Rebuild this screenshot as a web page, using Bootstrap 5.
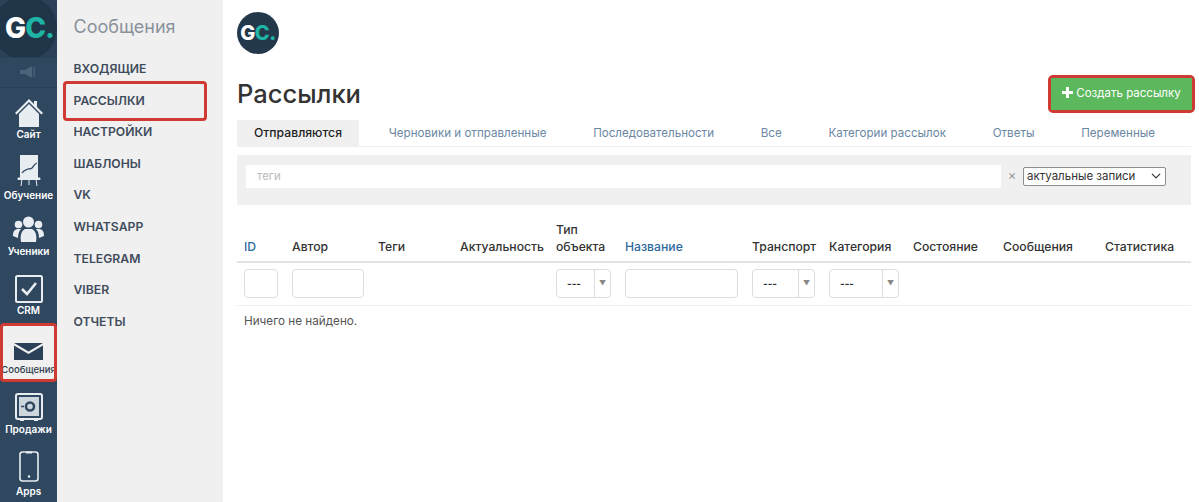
<!DOCTYPE html>
<html lang="ru">
<head>
    <meta charset="UTF-8">
    <meta name="viewport" content="width=device-width, initial-scale=1.0">
    <title>Рассылки</title>
    <link href="https://cdn.jsdelivr.net/npm/bootstrap@5.3.0/dist/css/bootstrap.min.css" rel="stylesheet">
    <style>
        html, body { height: 502px; overflow: hidden; }
        body { font-family: Inter, "Noto Sans", sans-serif; font-size: 13px; color: #333; background: #fff; }

        .rail { width: 57px; height: 502px; background: #2f475f; flex: none; }
        .rail-logo { height: 57px; background: #2b4158; overflow: hidden; }
        .rail-logo-circle { width: 64px; height: 64px; margin: -4px 0 0 -7px; border-radius: 50%; background: #1f3548; font-size: 28px; font-weight: 800; letter-spacing: -1px; color: #fff; padding-left: 9px; }
        .teal { color: #1fb5a6; }
        .rail-mute { height: 31px; border-top: 1px solid #2a3f55; border-bottom: 1px solid #2a3f55; }
        .rail-item { color: #fff; font-size: 10px; line-height: 12px; font-weight: 600; padding-bottom: 5px; white-space: nowrap; text-decoration: none; }
        .rail-item svg { display: block; }
        .h-site { height: 58px; }
        .h-learn { height: 61px; }
        .h-students { height: 56px; }
        .h-crm { height: 59px; }
        .h-msg { height: 60px; }
        .h-sales { height: 58px; }
        .h-apps { height: 62px; }
        .gap-s { margin-bottom: 1px; }
        .gap-m { margin-bottom: 2px; }
        .gap-l { margin-bottom: 3px; }
        .rail-active { background: #f0f0f0; color: #2f3d4d; border: 3px solid #cf3a32; border-radius: 4px; font-weight: 500; margin-top: 2px; padding-bottom: 3px; font-size: 9.5px; overflow: hidden; }
        .rail-active svg { margin-bottom: 4px; }

        .side { width: 166px; height: 502px; background: #f0f0f0; flex: none; padding: 15px 0 0 16.500px; }
        .side-title { font-size: 18px; line-height: 23px; color: #8a929c; margin-bottom: 15px; }
        .side-link { display: block; height: 31.600px; line-height: 31.600px; font-size: 12.200px; font-weight: 600; color: #3f4c5c; text-decoration: none; }
        .side-boxed { position: relative; }
        .side-boxed::after { content: ""; position: absolute; left: -10.500px; top: -4px; width: 144px; height: 40px; border: 3px solid #cf3a32; border-radius: 4px; }

        .page { width: 976px; padding: 12px 8px 0 14px; flex: none; }
        .page-logo { width: 42px; height: 42px; border-radius: 50%; background: #24384c; color: #fff; font-size: 20px; font-weight: 800; letter-spacing: -.5px; }
        .page-head { height: 72px; margin-top: 8px; }
        .page-title { font-size: 25.500px; font-weight: 500; color: #333; margin: 0; line-height: 32px; padding-top: 16px; }
        .create-wrap { border: 3px solid #cf3a32; border-radius: 5px; margin-right: -4px; margin-top: 13px; }
        .create-btn { width: 141px; height: 32px; background: #5cb85c; color: #fff; font-size: 11.500px; border: 0; border-radius: 0; padding: 0; }
        .create-btn:hover { background: #5cb85c; color: #fff; }
        .create-btn svg { margin-right: 3px; vertical-align: -1px; }

        .mail-tabs { height: 27px; border-bottom: 1px solid #eee; margin-top: -14px; gap: 12.700px; flex-wrap: nowrap; }
        .mail-tabs .nav-link { font-size: 11.600px; line-height: 26px; height: 26px; padding: 0 17px; color: #6b87a3; border-radius: 0; white-space: nowrap; }
        .mail-tabs .nav-link.active { background: #f0f0f0; color: #222; font-size: 12.200px; font-weight: 500; }
        .filter-bar { height: 50px; margin-top: 8px; background: #f0f0f0; padding: 0 25px 0 9px; }
        .tag-input { width: 755px; height: 23px; margin-bottom: 8px; background: #fff; color: #bbb; font-size: 11.500px; padding-left: 11px; line-height: 23px; }
        .tag-clear { width: 22px; margin-bottom: 8px; text-align: center; color: #999; font-size: 13px; }
        .state-select { width: 143px; height: 19px; min-height: 0; font-size: 11.500px; line-height: 15px; padding: 0 20px 0 3px; margin-bottom: 8px; margin-left: auto; border: 1px solid #8d8d8d; border-radius: 2px; color: #333; background-position: right 3px center; background-size: 12px 10px; font-family: inherit; }

        .mail-table { table-layout: fixed; width: 954px; margin: 9px 0 0; font-size: 12.200px; --bs-table-border-color: #eee; }
        .mail-table th { font-weight: 500; color: #333; padding: 0 7px 6px; line-height: 17px; vertical-align: bottom; border-bottom: 2px solid #e4e4e4; height: 48px; }
        .mail-table th .sort-link { color: #2d6a9f; text-decoration: none; }
        .mail-table td { padding: 6px 7px 7px; height: 43px; border-bottom: 1px solid #eee; vertical-align: top; }
        .mail-table tr.empty-row td { border: 0; padding: 7px; height: auto; color: #555; font-size: 11.700px; }
        .cell-input { height: 29px; border: 1px solid #ddd; border-radius: 4px; background: #fff; }
        .cell-select { height: 29px; border: 1px solid #ddd; border-radius: 4px; background: #fff; color: #333; font-size: 10px; font-weight: 700; line-height: 27px; padding-left: 10px; }
        .cell-arrow { width: 16px; margin-left: auto; border-left: 1px solid #ddd; color: #888; font-size: 7px; text-align: center; font-weight: 400; }
    </style>
</head>
<body class="d-flex">

<!-- Main rail -->
<div class="rail d-flex flex-column">
    <div class="rail-logo">
        <div class="rail-logo-circle d-flex align-items-center justify-content-center"><span>G<span class="teal">C.</span></span></div>
    </div>
    <div class="rail-mute d-flex align-items-center justify-content-center">
        <svg width="20" height="14" viewBox="0 0 20 14"><path d="M1 5h5l7-4v12l-7-4H1z" fill="#4d6379"/><rect x="14" y="2" width="2" height="10" fill="#42586e"/></svg>
    </div>
    <a class="rail-item h-site d-flex flex-column align-items-center justify-content-end">
        <svg class="gap-s" width="30" height="29" viewBox="0 0 30 29"><path d="M15 1 1 15l1.500 1.500L15 4l12.500 12.500L29 15 23 9V3h-3v3z" fill="#e8edf2"/><path d="M5 16 15 6l10 10v13H5z" fill="#e8edf2"/></svg>
        <span>Сайт</span>
    </a>
    <a class="rail-item h-learn d-flex flex-column align-items-center justify-content-end">
        <svg class="gap-m" width="24" height="33" viewBox="0 0 24 33"><path d="M3 1h18v23H3z" fill="#e8edf2"/><path d="M5 19c2-3 4-3 6-4s2 1 4-1 2-4 5-5" fill="none" stroke="#2f475f" stroke-width="1.300"/><path d="M1 24h22v1.500H1zM5 25l-1 7M19 25l1 7M12 25v6" stroke="#e8edf2" stroke-width="1" fill="#e8edf2"/></svg>
        <span>Обучение</span>
    </a>
    <a class="rail-item h-students d-flex flex-column align-items-center justify-content-end">
        <svg class="gap-l" width="31" height="26" viewBox="0 0 31 26" fill="#e8edf2"><circle cx="15.500" cy="6" r="5.500"/><circle cx="5.500" cy="8.500" r="3.800"/><circle cx="25.500" cy="8.500" r="3.800"/><path d="M8 26c-1-6 0-11 4-13h7c4 2 5 7 4 13z"/><path d="M0 20c0-4 1-6 4-7h4c-2 2-3 5-3 9zM31 20c0-4-1-6-4-7h-4c2 2 3 5 3 9z"/></svg>
        <span>Ученики</span>
    </a>
    <a class="rail-item h-crm d-flex flex-column align-items-center justify-content-end">
        <svg class="gap-s" width="28" height="28" viewBox="0 0 28 28"><rect x="1" y="1" width="26" height="26" rx="1.500" fill="none" stroke="#e8edf2" stroke-width="2"/><path d="m7 14 5 5 9-11" fill="none" stroke="#e8edf2" stroke-width="2.600"/></svg>
        <span>CRM</span>
    </a>
    <a class="rail-item rail-active h-msg d-flex flex-column align-items-center justify-content-end">
        <svg width="29" height="18" viewBox="0 0 29 18"><path d="M0 1h29L14.500 9.500z" fill="#2b4158"/><path d="M0 3.500 14.500 12 29 3.500V18H0z" fill="#2b4158"/></svg>
        <span>Сообщения</span>
    </a>
    <a class="rail-item h-sales d-flex flex-column align-items-center justify-content-end">
        <svg class="gap-s" width="28" height="29" viewBox="0 0 28 29"><rect x="1" y="1" width="26" height="25" rx="2" fill="none" stroke="#e8edf2" stroke-width="2"/><rect x="4" y="4" width="20" height="19" fill="#cdd5dd"/><circle cx="15" cy="13.500" r="4" fill="none" stroke="#2f475f" stroke-width="2.500"/><path d="M6 13.500h3" stroke="#2f475f" stroke-width="1.500"/><path d="M5 26h4v2H5zM19 26h4v2h-4z" fill="#e8edf2"/></svg>
        <span>Продажи</span>
    </a>
    <a class="rail-item h-apps d-flex flex-column align-items-center justify-content-end">
        <svg class="gap-l" width="20" height="31" viewBox="0 0 20 31"><rect x="1" y="1" width="18" height="29" rx="2.500" fill="none" stroke="#e8edf2" stroke-width="1.600"/><path d="M7 1.500h6" stroke="#e8edf2" stroke-width="2"/><circle cx="10" cy="25.500" r="1.200" fill="#e8edf2"/></svg>
        <span>Apps</span>
    </a>
</div>

<!-- Section menu -->
<div class="side">
    <div class="side-title">Сообщения</div>
    <a class="side-link">ВХОДЯЩИЕ</a>
    <a class="side-link side-boxed">РАССЫЛКИ</a>
    <a class="side-link">НАСТРОЙКИ</a>
    <a class="side-link">ШАБЛОНЫ</a>
    <a class="side-link">VK</a>
    <a class="side-link">WHATSAPP</a>
    <a class="side-link">TELEGRAM</a>
    <a class="side-link">VIBER</a>
    <a class="side-link">ОТЧЕТЫ</a>
</div>

<!-- Content -->
<div class="page">
    <div class="page-logo d-flex align-items-center justify-content-center"><span>G<span class="teal">C.</span></span></div>

    <div class="page-head d-flex justify-content-between align-items-start">
        <h1 class="page-title">Рассылки</h1>
        <div class="create-wrap">
            <button type="button" class="btn create-btn"><svg width="11" height="11" viewBox="0 0 11 11"><path d="M4 0h3v4h4v3H7v4H4V7H0V4h4z" fill="#fff"/></svg>Создать рассылку</button>
        </div>
    </div>

    <ul class="nav mail-tabs">
        <li class="nav-item"><a class="nav-link active">Отправляются</a></li>
        <li class="nav-item"><a class="nav-link">Черновики и отправленные</a></li>
        <li class="nav-item"><a class="nav-link">Последовательности</a></li>
        <li class="nav-item"><a class="nav-link">Все</a></li>
        <li class="nav-item"><a class="nav-link">Категории рассылок</a></li>
        <li class="nav-item"><a class="nav-link">Ответы</a></li>
        <li class="nav-item"><a class="nav-link">Переменные</a></li>
    </ul>

    <div class="filter-bar d-flex align-items-center">
        <div class="tag-input">теги</div>
        <div class="tag-clear">×</div>
        <select class="form-select state-select">
            <option>актуальные записи</option>
        </select>
    </div>

    <table class="table mail-table">
        <colgroup>
            <col style="width:48px"><col style="width:86px"><col style="width:82px"><col style="width:96px"><col style="width:69px"><col style="width:127px"><col style="width:77px"><col style="width:84px"><col style="width:90px"><col style="width:102px"><col style="width:93px">
        </colgroup>
        <thead>
            <tr>
                <th><a class="sort-link">ID</a></th>
                <th>Автор</th>
                <th>Теги</th>
                <th>Актуальность</th>
                <th>Тип объекта</th>
                <th><a class="sort-link">Название</a></th>
                <th>Транспорт</th>
                <th>Категория</th>
                <th>Состояние</th>
                <th>Сообщения</th>
                <th>Статистика</th>
            </tr>
        </thead>
        <tbody>
            <tr>
                <td><div class="cell-input"></div></td>
                <td><div class="cell-input"></div></td>
                <td></td>
                <td></td>
                <td><div class="cell-select d-flex">---<span class="cell-arrow">▼</span></div></td>
                <td><div class="cell-input"></div></td>
                <td><div class="cell-select d-flex">---<span class="cell-arrow">▼</span></div></td>
                <td><div class="cell-select d-flex">---<span class="cell-arrow">▼</span></div></td>
                <td></td>
                <td></td>
                <td></td>
            </tr>
            <tr class="empty-row">
                <td colspan="11">Ничего не найдено.</td>
            </tr>
        </tbody>
    </table>
</div>

</body>
</html>
